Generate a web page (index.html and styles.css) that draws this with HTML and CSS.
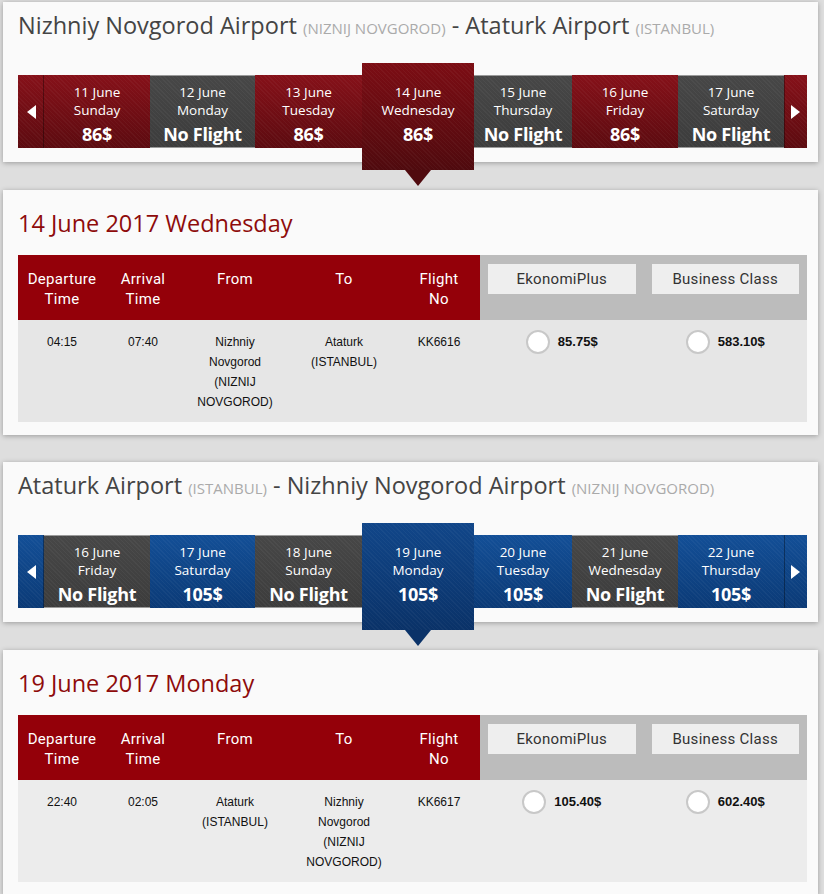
FILE: index.html
```html
<!DOCTYPE html>
<html lang="en">

<head>
    <meta charset="UTF-8">
    <title>Flight Selection</title>
    <link rel="stylesheet" href="styles.css">
</head>

<body>
    <!-- Outbound -->
    <div class="card route">
        <h2 class="route-title">Nizhniy Novgorod Airport <small>(NIZNIJ NOVGOROD)</small> - Ataturk Airport <small>(ISTANBUL)</small></h2>
        <div class="strip red">
            <div class="nav prev"><svg width="9" height="14" viewBox="0 0 9 14"><polygon points="9,0 9,14 0,7" fill="#fff"/></svg></div>
            <div class="day"><span>11 June</span><span>Sunday</span><b>86$</b></div>
            <div class="day none"><span>12 June</span><span>Monday</span><b>No Flight</b></div>
            <div class="day"><span>13 June</span><span>Tuesday</span><b>86$</b></div>
            <div class="day sel"><span>14 June</span><span>Wednesday</span><b>86$</b></div>
            <div class="day none"><span>15 June</span><span>Thursday</span><b>No Flight</b></div>
            <div class="day"><span>16 June</span><span>Friday</span><b>86$</b></div>
            <div class="day none"><span>17 June</span><span>Saturday</span><b>No Flight</b></div>
            <div class="nav next"><svg width="9" height="14" viewBox="0 0 9 14"><polygon points="0,0 9,7 0,14" fill="#fff"/></svg></div>
        </div>
    </div>

    <div class="card flights">
        <h3 class="date-title">14 June 2017 Wednesday</h3>
        <div class="ftable">
            <div class="th">Departure<br>Time</div>
            <div class="th">Arrival<br>Time</div>
            <div class="th">From</div>
            <div class="th">To</div>
            <div class="th">Flight<br>No</div>
            <div class="th cls"><span>EkonomiPlus</span></div>
            <div class="th cls"><span>Business Class</span></div>

            <div class="td">04:15</div>
            <div class="td">07:40</div>
            <div class="td">Nizhniy Novgorod (NIZNIJ NOVGOROD)</div>
            <div class="td">Ataturk (ISTANBUL)</div>
            <div class="td">KK6616</div>
            <div class="td fare"><i class="radio"></i><b>85.75$</b></div>
            <div class="td fare"><i class="radio"></i><b>583.10$</b></div>
        </div>
    </div>

    <!-- Return -->
    <div class="card route">
        <h2 class="route-title">Ataturk Airport <small>(ISTANBUL)</small> - Nizhniy Novgorod Airport <small>(NIZNIJ NOVGOROD)</small></h2>
        <div class="strip blue">
            <div class="nav prev"><svg width="9" height="14" viewBox="0 0 9 14"><polygon points="9,0 9,14 0,7" fill="#fff"/></svg></div>
            <div class="day none"><span>16 June</span><span>Friday</span><b>No Flight</b></div>
            <div class="day"><span>17 June</span><span>Saturday</span><b>105$</b></div>
            <div class="day none"><span>18 June</span><span>Sunday</span><b>No Flight</b></div>
            <div class="day sel"><span>19 June</span><span>Monday</span><b>105$</b></div>
            <div class="day"><span>20 June</span><span>Tuesday</span><b>105$</b></div>
            <div class="day none"><span>21 June</span><span>Wednesday</span><b>No Flight</b></div>
            <div class="day"><span>22 June</span><span>Thursday</span><b>105$</b></div>
            <div class="nav next"><svg width="9" height="14" viewBox="0 0 9 14"><polygon points="0,0 9,7 0,14" fill="#fff"/></svg></div>
        </div>
    </div>

    <div class="card flights">
        <h3 class="date-title">19 June 2017 Monday</h3>
        <div class="ftable light">
            <div class="th">Departure<br>Time</div>
            <div class="th">Arrival<br>Time</div>
            <div class="th">From</div>
            <div class="th">To</div>
            <div class="th">Flight<br>No</div>
            <div class="th cls"><span>EkonomiPlus</span></div>
            <div class="th cls"><span>Business Class</span></div>

            <div class="td">22:40</div>
            <div class="td">02:05</div>
            <div class="td">Ataturk (ISTANBUL)</div>
            <div class="td">Nizhniy Novgorod (NIZNIJ NOVGOROD)</div>
            <div class="td">KK6617</div>
            <div class="td fare"><i class="radio"></i><b>105.40$</b></div>
            <div class="td fare"><i class="radio"></i><b>602.40$</b></div>
        </div>
    </div>
</body>

</html>
```

FILE: styles.css
```css
/* Flight search result page */
body {
    margin: 0;
    padding: 2px 6px 0 3px;
    background: #dedede;
    font-family: 'Open Sans', 'Noto Sans', sans-serif;
    color: #333;
}

.card {
    background: #fafafa;
    box-shadow: 0 1px 5px rgba(0, 0, 0, 0.3);
    padding: 8px 11px 13px 15px;
    margin-bottom: 28px;
}

.flights {
    margin-bottom: 27px;
}

.route {
    height: 139px;
}

.route-title {
    margin: 0;
    font-size: 23.5px;
    font-weight: 400;
    line-height: 30px;
    color: #444;
}

.route-title small {
    font-size: 15px;
    color: #aaa;
}

/* Date strip */
.strip {
    display: grid;
    grid-template-columns: 26px 106px 105px 107px 112px 98px 106px 106px 23px;
    height: 73px;
    margin-top: 32px;
}

.nav {
    display: flex;
    align-items: center;
    justify-content: center;
    box-shadow: inset -1px 0 0 rgba(0, 0, 0, 0.35);
}

.nav.next {
    box-shadow: inset 1px 0 0 rgba(0, 0, 0, 0.35);
}

.day {
    display: flex;
    flex-direction: column;
    align-items: center;
    padding-top: 8px;
    color: #fff;
    font-size: 13.5px;
    line-height: 18px;
}

.day b {
    margin-top: 3px;
    font-size: 18px;
    line-height: 24px;
    font-weight: 700;
    letter-spacing: -0.3px;
}

.day.sel {
    margin: -12px 0 -22px;
    padding-top: 20px;
    position: relative;
}

.day.sel::after {
    content: '';
    position: absolute;
    left: 43px;
    bottom: -16px;
    border-left: 13px solid transparent;
    border-right: 13px solid transparent;
    border-top: 16px solid #500a0e;
}

.strip .nav,
.strip .day {
    background-image: repeating-linear-gradient(45deg, rgba(255, 255, 255, 0.035) 0 1px, transparent 1px 3px), var(--grad);
}

.red .nav,
.red .day {
    --grad: linear-gradient(#861119, #5c0b10);
}

.red .day.sel {
    --grad: linear-gradient(#7c0d14, #4f0a0e);
}

.blue .nav,
.blue .day {
    --grad: linear-gradient(#134f97, #0b3a76);
}

.blue .day.sel {
    --grad: linear-gradient(#114689, #0a3268);
}

.blue .day.sel::after {
    border-top-color: #0a3268;
}

.strip .day.none {
    --grad: linear-gradient(#474747, #3c3c3c);
    box-shadow: inset 0 1px 0 #9a9a9a, inset 0 -1px 0 #9a9a9a;
}

/* Flight table */
.date-title {
    margin: 10px 0 17px;
    font-size: 23.5px;
    font-weight: 400;
    line-height: 30px;
    color: #8e0b0b;
}

.ftable {
    display: grid;
    grid-template-columns: 88px 74px 110px 108px 82px 1fr 1fr;
}

.th {
    background: #940009;
    color: #fff;
    font-family: Roboto, sans-serif;
    font-size: 15px;
    line-height: 20px;
    text-align: center;
    padding: 14px 0 11px;
    letter-spacing: 0.3px;
}

.th.cls {
    background: #bcbcbc;
    padding: 9px 8px;
}

.th.cls span {
    display: block;
    background: #eeeeee;
    color: #333;
    line-height: 30px;
}

.td {
    background: #e6e6e6;
    font-family: 'Liberation Sans', Arial, sans-serif;
    font-size: 12px;
    line-height: 20px;
    color: #111;
    text-align: center;
    padding: 12px 10px 10px;
    min-height: 80px;
}

.light .td {
    background: #ececec;
}

.td.fare {
    display: flex;
    justify-content: center;
    align-items: flex-start;
    gap: 8px;
    padding-top: 10px;
}

.td.fare b {
    font-size: 13px;
    line-height: 24px;
}

.radio {
    width: 20px;
    height: 20px;
    border: 2px solid #c8c8c8;
    border-radius: 50%;
    background: #fff;
}
```
